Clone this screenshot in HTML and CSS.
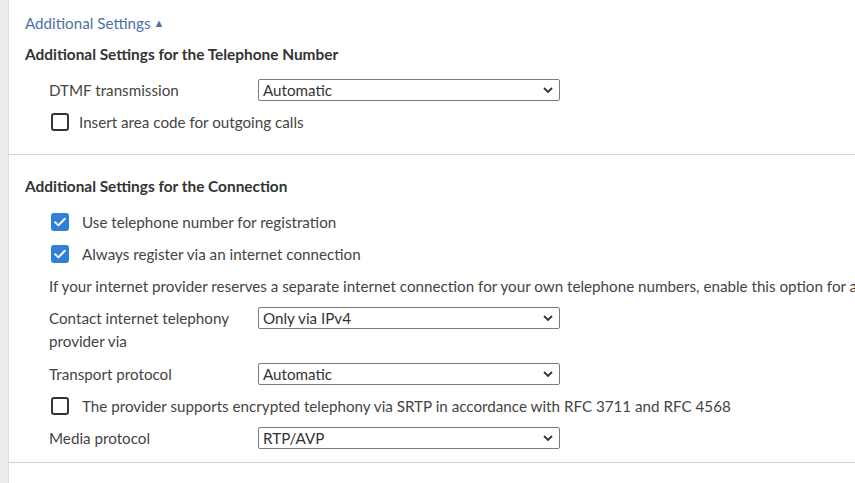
FILE: index.html
```html
<!DOCTYPE html>
<html lang="en">
<head>
<meta charset="utf-8">
<title>Additional Settings</title>
<link rel="stylesheet" href="styles.css">
</head>
<body>
<div class="page">
  <div class="strip"></div>
  <main class="main">
    <a class="toggle" href="#">Additional Settings<span class="tri">&#9650;</span></a>

    <section class="section first">
      <h3 class="heading">Additional Settings for the Telephone Number</h3>
      <div class="rows">
        <div class="row">
          <span class="label">DTMF transmission</span>
          <div class="select"><span>Automatic</span><svg class="chev" viewBox="0 0 10 6" width="10" height="6"><path d="M1 1l4 4 4-4" fill="none" stroke="#333" stroke-width="1.8"/></svg></div>
        </div>
        <label class="check"><span class="box"></span><span class="ctext">Insert area code for outgoing calls</span></label>
      </div>
    </section>

    <hr class="divider">

    <section class="section second">
      <h3 class="heading">Additional Settings for the Connection</h3>
      <div class="rows">
        <label class="check on"><span class="box"><svg viewBox="0 0 18 18" width="18" height="18"><path d="M4.2 9.3l3.2 3.1 6.4-6.6" fill="none" stroke="#fff" stroke-width="2" stroke-linecap="round" stroke-linejoin="round"/></svg></span><span class="ctext">Use telephone number for registration</span></label>
        <label class="check on"><span class="box"><svg viewBox="0 0 18 18" width="18" height="18"><path d="M4.2 9.3l3.2 3.1 6.4-6.6" fill="none" stroke="#fff" stroke-width="2" stroke-linecap="round" stroke-linejoin="round"/></svg></span><span class="ctext">Always register via an internet connection</span></label>
        <p class="note">If your internet provider reserves a separate internet connection for your own telephone numbers, enable this option for a</p>
        <div class="row tall">
          <span class="label">Contact internet telephony provider via</span>
          <div class="select"><span>Only via IPv4</span><svg class="chev" viewBox="0 0 10 6" width="10" height="6"><path d="M1 1l4 4 4-4" fill="none" stroke="#333" stroke-width="1.8"/></svg></div>
        </div>
        <div class="row">
          <span class="label">Transport protocol</span>
          <div class="select"><span>Automatic</span><svg class="chev" viewBox="0 0 10 6" width="10" height="6"><path d="M1 1l4 4 4-4" fill="none" stroke="#333" stroke-width="1.8"/></svg></div>
        </div>
        <label class="check"><span class="box"></span><span class="ctext wide">The provider supports encrypted telephony via SRTP in accordance with RFC 3711 and RFC 4568</span></label>
        <div class="row">
          <span class="label">Media protocol</span>
          <div class="select"><span>RTP/AVP</span><svg class="chev" viewBox="0 0 10 6" width="10" height="6"><path d="M1 1l4 4 4-4" fill="none" stroke="#333" stroke-width="1.8"/></svg></div>
        </div>
      </div>
    </section>

    <hr class="divider">
  </main>
</div>
</body>
</html>
```
FILE: styles.css
```css
html, body {
  margin: 0;
  padding: 0;
  background: #fff;
  overflow: hidden;
}
body {
  font-family: Lato, "Liberation Sans", sans-serif;
  font-size: 15.2px;
  color: #444;
}
.page {
  display: flex;
  min-height: 483px;
}
.strip {
  width: 8px;
  flex: none;
  background: #ececec;
  border-right: 1px solid #dedede;
}
.main {
  flex: 1;
  min-width: 0;
  padding: 12px 0 0 16px;
  white-space: nowrap;
  line-height: 22px;
}
.toggle {
  display: block;
  width: max-content;
  line-height: 22px;
  color: #4c70a6;
  text-decoration: none;
}
.tri {
  font-size: 11px;
  margin-left: 3px;
  vertical-align: 2px;
  line-height: 1;
}
.section.first { margin-top: 9px; }
.heading {
  margin: 0;
  font-size: 15.4px;
  font-weight: 700;
  line-height: 22px;
  color: #333;
}
.rows {
  display: flex;
  flex-direction: column;
  gap: 10px;
  padding-left: 24px;
  margin-top: 14px;
}
.row {
  display: flex;
  align-items: flex-start;
  line-height: 22px;
}
.row.tall { line-height: 23px; }
.label {
  width: 209px;
  flex: none;
  white-space: normal;
}
.select {
  height: 20px;
  width: 290px;
  border: 1px solid #7a7a7a;
  border-radius: 2px;
  display: flex;
  align-items: center;
  justify-content: space-between;
  padding: 0 6px 0 4px;
  box-sizing: content-box;
  color: #333;
  line-height: 20px;
}
.chev { flex: none; }
.check {
  display: flex;
  align-items: center;
  height: 22px;
  cursor: pointer;
}
.box {
  width: 14px;
  height: 14px;
  border: 2px solid #333;
  border-radius: 3px;
  margin-left: 2px;
  flex: none;
  position: relative;
}
.check.on .box {
  background: #2f80d6;
  border-color: #2f80d6;
}
.check.on .box svg {
  position: absolute;
  left: -2px;
  top: -2px;
}
.ctext { margin-left: 10px; }
.check.on .ctext, .ctext.wide { margin-left: 13px; }
.note {
  margin: 0;
  line-height: 22px;
  overflow: hidden;
}
.divider {
  border: 0;
  border-top: 1px solid #d0d0d0;
  margin: 21px 0 0 -16px;
  height: 0;
}
.section.second { margin-top: 20px; }
.section.second + .divider { margin-top: 13px; }
```
